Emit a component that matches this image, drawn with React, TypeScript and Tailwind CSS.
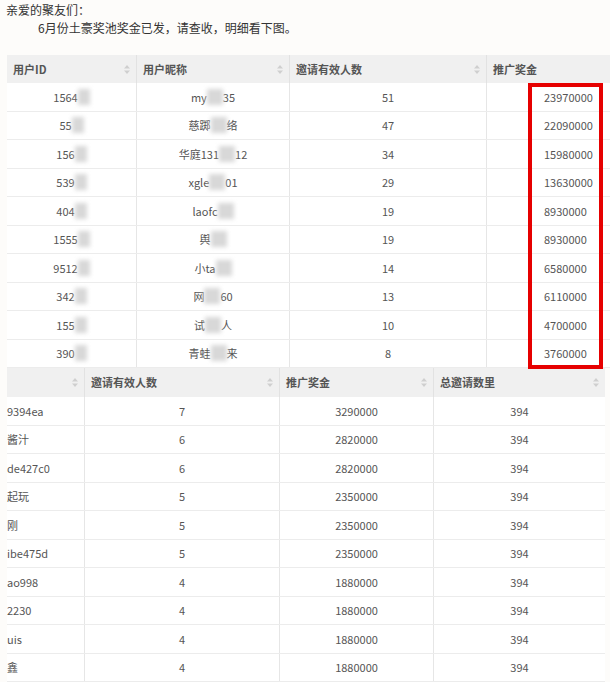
const t1 = [
  ["1564", "my", "35", "51", "23970000"],
  ["55", "慈踯", "络", "47", "22090000"],
  ["156", "华庭131", "12", "34", "15980000"],
  ["539", "xgle", "01", "29", "13630000"],
  ["404", "laofc", "", "19", "8930000"],
  ["1555", "舆", "", "19", "8930000"],
  ["9512", "小ta", "", "14", "6580000"],
  ["342", "网", "60", "13", "6110000"],
  ["155", "试", "人", "10", "4700000"],
  ["390", "青蛙", "来", "8", "3760000"],
];
const t2 = [
  ["9394ea", "7", "3290000"],
  ["酱汁", "6", "2820000"],
  ["de427c0", "6", "2820000"],
  ["起玩", "5", "2350000"],
  ["刚", "5", "2350000"],
  ["ibe475d", "5", "2350000"],
  ["ao998", "4", "1880000"],
  ["2230", "4", "1880000"],
  ["uis", "4", "1880000"],
  ["鑫", "4", "1880000"],
];

function Blur({ w = 14 }: { w?: number }) {
  return <span className="inline-block h-[16px] bg-[#d8d8d8] blur-[2px] align-middle" style={{ width: w }} />;
}

function Sort() {
  return (
    <svg width="6" height="9" viewBox="0 0 6 9" className="shrink-0">
      <path d="M3 0L6 3.5H0Z" fill="#cfcfcf" />
      <path d="M3 9L6 5.5H0Z" fill="#cfcfcf" />
    </svg>
  );
}

function Th({ label, w }: { label: string; w: string }) {
  return (
    <div className={`${w} shrink-0 h-full flex items-center justify-between px-[6px] border-r border-[#e2e2e2] font-bold`}>
      <span>{label}</span>
      <Sort />
    </div>
  );
}

export default function App() {
  return (
    <div className="w-[610px] h-[682px] overflow-hidden bg-[#fdfcfa] text-[12px] text-[#333]" style={{ fontFamily: '"Noto Sans CJK SC", "Liberation Sans", sans-serif' }}>
      <div className="pl-[6px] pt-[1px] text-[12px] leading-[18px]">
        <div>亲爱的聚友们：</div>
        <div className="pl-[32px]">6月份土豪奖池奖金已发，请查收，明细看下图。</div>
      </div>
      <div className="relative mt-[18px] ml-[7px] w-[603px] text-[11px]">
        <div className="flex h-[28px] bg-[#f0f0f0] text-[#555]">
          <Th label="用户ID" w="w-[130px]" />
          <Th label="用户昵称" w="w-[153px]" />
          <Th label="邀请有效人数" w="w-[197px]" />
          <div className="flex-1 h-full flex items-center px-[6px] font-bold"><span>推广奖金</span></div>
        </div>
        {t1.map((r, i) => (
          <div key={i} className="flex h-[28.5px] bg-white border-b border-[#ececec] text-[#555]">
            <div className="w-[130px] flex items-center justify-center border-r border-[#e6e6e6]">{r[0]}<Blur w={12} /></div>
            <div className="w-[153px] flex items-center justify-center border-r border-[#e6e6e6]">{r[1]}<Blur w={16} />{r[2]}</div>
            <div className="w-[197px] flex items-center justify-center border-r border-[#e6e6e6]">{r[3]}</div>
            <div className="flex-1 flex items-center pl-[57px]">{r[4]}</div>
          </div>
        ))}
        <div className="absolute left-[521px] top-[28px] w-[75px] h-[286px] border-[4px] border-[#e60000]" />
      </div>
      <div className="ml-[7px] w-[598px] text-[11px]">
        <div className="flex h-[29px] bg-[#f0f0f0] text-[#555]">
          <div className="w-[78px] h-full flex items-center justify-end pr-[6px] border-r border-[#e2e2e2]"><Sort /></div>
          <Th label="邀请有效人数" w="w-[195px]" />
          <Th label="推广奖金" w="w-[154px]" />
          <div className="flex-1 h-full flex items-center justify-between px-[6px] font-bold"><span>总邀请数里</span><Sort /></div>
        </div>
        {t2.map((r, i) => (
          <div key={i} className="flex h-[28.5px] bg-white border-b border-[#ececec] text-[#555]">
            <div className="w-[78px] flex items-center border-r border-[#e6e6e6]">{r[0]}</div>
            <div className="w-[195px] flex items-center justify-center border-r border-[#e6e6e6]">{r[1]}</div>
            <div className="w-[154px] flex items-center justify-center border-r border-[#e6e6e6]">{r[2]}</div>
            <div className="flex-1 flex items-center justify-center">394</div>
          </div>
        ))}
      </div>
    </div>
  );
}
